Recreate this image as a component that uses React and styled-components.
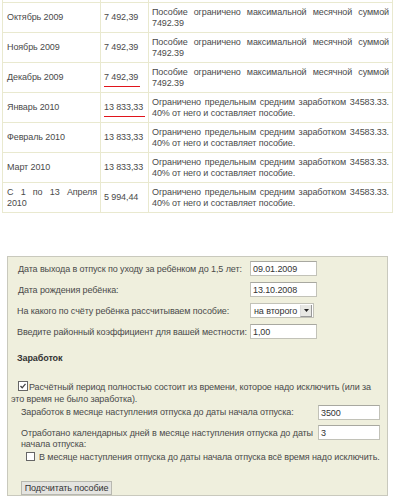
import React from 'react';
import styled, { createGlobalStyle } from 'styled-components';

const Global = createGlobalStyle`
  body {
    margin: 0;
    background: #fff;
    font-family: "Liberation Sans", Arial, sans-serif;
    font-size: 9px;
    letter-spacing: -0.1px;
    color: #4a4a4a;
  }
`;

const Page = styled.div`
  width: 394px;
  height: 502px;
  overflow: hidden;
`;

const Table = styled.table`
  margin-left: 2px;
  border-collapse: collapse;
  table-layout: fixed;
  width: 391px;
`;

const Cell = styled.td`
  border: 1px solid #e9e9cf;
  padding: 0 3px 0 ${p => p.$pl || 4}px;
  height: ${p => (p.$stub ? 2 : 29)}px;
  line-height: 11px;
  vertical-align: middle;
  white-space: ${p => (p.$nowrap ? 'nowrap' : 'normal')};
  text-align: ${p => (p.$justify ? 'justify' : 'left')};
  ${p => p.$stub && 'border-top: none;'}
`;

const Marked = styled.span`
  display: inline-block;
  border-bottom: 1px solid #e0141c;
  padding-bottom: 3px;
  margin-bottom: -4px;
  padding-right: 2px;
`;

const Spacer = styled.div`
  height: 43px;
`;

const FormBox = styled.div`
  margin-left: 7px;
  width: 379px;
  height: 234px;
  border: 1px solid #c9c9bd;
  background: #efefdd;
  padding: 4px 0 0 0;
  box-sizing: content-box;
  overflow: hidden;
`;

const TopRows = styled.div`
  display: flex;
  flex-direction: column;
  gap: 6px;
  padding-left: 9px;
`;

const Row = styled.div`
  display: grid;
  grid-template-columns: 233px auto;
  align-items: center;
  height: 15px;
`;

const Label = styled.span`
  padding-left: ${p => p.$pl || 0}px;
  white-space: nowrap;
`;

const Input = styled.div`
  box-sizing: border-box;
  width: ${p => p.$w || 67}px;
  height: ${p => p.$h || 15}px;
  background: #fff;
  border: 1px solid #c2c2b8;
  border-top-color: #a8a8a0;
  padding: 1px 2px 0;
  line-height: 12px;
  color: #333;
`;

const Select = styled.div`
  box-sizing: border-box;
  width: 64px;
  height: 15px;
  background: #fff;
  border: 1px solid #c2c2b8;
  display: flex;
  align-items: center;
  justify-content: space-between;
  padding: 0 1px 0 3px;
  color: #333;
  white-space: nowrap;
`;

const ArrowBtn = styled.span`
  width: 10px;
  height: 11px;
  background: #e8e8e4;
  border-left: 1px solid #ddd;
  border-right: 1px solid #999;
  border-bottom: 1px solid #999;
  display: flex;
  align-items: center;
  justify-content: center;
`;

const Heading = styled.div`
  font-weight: bold;
  padding: 14px 0 0 9px;
  color: #333;
`;

const CheckPara = styled.div`
  margin: 18px 0 0 3px;
  line-height: 12px;
  padding-right: 6px;
`;

const Box = styled.span`
  display: inline-block;
  box-sizing: border-box;
  width: ${p => p.$s}px;
  height: ${p => p.$s}px;
  border: 1px solid #666;
  background: #fff;
  vertical-align: -1px;
  margin: 0 ${p => p.$mr}px 0 ${p => p.$ml}px;
  position: relative;
`;

const EarnRow = styled.div`
  display: grid;
  grid-template-columns: 297px 62px;
  align-items: ${p => (p.$top ? 'start' : 'center')};
  padding-left: 13px;
  margin-top: ${p => p.$mt}px;
  line-height: 11px;
`;

const Justify = styled.span`
  text-align: justify;
  padding-right: 5px;
  padding-top: ${p => p.$pt || 0}px;
`;

const CheckLine = styled.div`
  margin: 2px 0 0 10px;
`;

const Button = styled.div`
  margin: 19px 0 0 13px;
  width: 91px;
  height: 14px;
  box-sizing: border-box;
  border: 1px solid #b8b8b0;
  background: #e4e4e0;
  line-height: 12px;
  text-align: center;
  color: #333;
`;

const rows = [
  ['Октябрь 2009', '7 492,39', 'Пособие ограничено максимальной месячной суммой 7492.39', false],
  ['Ноябрь 2009', '7 492,39', 'Пособие ограничено максимальной месячной суммой 7492.39', false],
  ['Декабрь 2009', '7 492,39', 'Пособие ограничено максимальной месячной суммой 7492.39', true],
  ['Январь 2010', '13 833,33', 'Ограничено предельным средним заработком 34583.33. 40% от него и составляет пособие.', true],
  ['Февраль 2010', '13 833,33', 'Ограничено предельным средним заработком 34583.33. 40% от него и составляет пособие.', false],
  ['Март 2010', '13 833,33', 'Ограничено предельным средним заработком 34583.33. 40% от него и составляет пособие.', false],
  ['С 1 по 13 Апреля 2010', '5 994,44', 'Ограничено предельным средним заработком 34583.33. 40% от него и составляет пособие.', false],
];

const Check = () => (
  <svg width="8" height="8" viewBox="0 0 8 8" style={{ position: 'absolute', left: 0, top: 0 }}>
    <path d="M1.5 4 L3.2 5.8 L6.5 1.8" fill="none" stroke="#444" strokeWidth="1.3" />
  </svg>
);

export default function App() {
  return (
    <Page>
      <Global />
      <Table>
        <colgroup>
          <col style={{ width: 98 }} />
          <col style={{ width: 48 }} />
          <col />
        </colgroup>
        <tbody>
          <tr>
            <Cell $stub />
            <Cell $stub />
            <Cell $stub />
          </tr>
          {rows.map(([m, v, t, mark], i) => (
            <tr key={i}>
              <Cell $justify>{m}</Cell>
              <Cell $pl={3} $nowrap>{mark ? <Marked>{v}</Marked> : v}</Cell>
              <Cell $justify $pl={3}>{t}</Cell>
            </tr>
          ))}
        </tbody>
      </Table>
      <Spacer />
      <FormBox>
        <TopRows>
          <Row>
            <Label $pl={1}>Дата выхода в отпуск по уходу за ребёнком до 1,5 лет:</Label>
            <Input>09.01.2009</Input>
          </Row>
          <Row>
            <Label $pl={1}>Дата рождения ребёнка:</Label>
            <Input>13.10.2008</Input>
          </Row>
          <Row>
            <Label>На какого по счёту ребёнка рассчитываем пособие:</Label>
            <Select>
              на второго
              <ArrowBtn>
                <svg width="5" height="3" viewBox="0 0 5 3">
                  <path d="M0 0 H5 L2.5 3 Z" fill="#222" />
                </svg>
              </ArrowBtn>
            </Select>
          </Row>
          <Row>
            <Label>Введите районный коэффициент для вашей местности:</Label>
            <Input>1,00</Input>
          </Row>
        </TopRows>
        <Heading>Заработок</Heading>
        <CheckPara>
          <Box $s={10} $ml={7} $mr={1}>
            <Check />
          </Box>
          Расчётный период полностью состоит из времени, которое надо исключить (или за
          это время не было заработка).
        </CheckPara>
        <EarnRow $mt={0}>
          <span>Заработок в месяце наступления отпуска до даты начала отпуска:</span>
          <Input $w={62}>3500</Input>
        </EarnRow>
        <EarnRow $mt={5} $top>
          <Justify $pt={3}>Отработано календарных дней в месяце наступления отпуска до даты начала отпуска:</Justify>
          <Input $w={62}>3</Input>
        </EarnRow>
        <CheckLine>
          <Box $s={9} $ml={8} $mr={4} />
          В месяце наступления отпуска до даты начала отпуска всё время надо исключить.
        </CheckLine>
        <Button>Подсчитать пособие</Button>
      </FormBox>
    </Page>
  );
}
